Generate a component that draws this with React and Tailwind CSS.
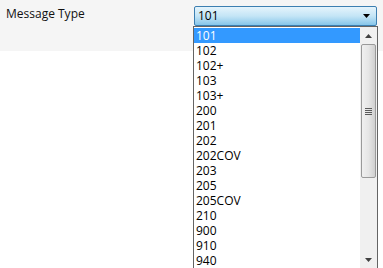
import React from "react";

const items = ["101","102","102+","103","103+","200","201","202","202COV","203","205","205COV","210","900","910","940"];

export default function App() {
  return (
    <div className="relative w-[383px] h-[268px] bg-white overflow-hidden" style={{ fontFamily: '"Segoe UI", "Open Sans", "Noto Sans", sans-serif' }}>
      <div className="h-[51px] bg-[#f5f5f5] flex items-start">
        <div className="pl-[6px] pt-[6px] text-[12px] leading-[16px] text-[#111] w-[194px]">Message Type</div>
        <div className="mt-[6px] w-[183px] h-[20px] border border-[#3c7fb1] rounded-[2px] bg-gradient-to-b from-[#e5f4fc] via-[#c4e5f6] to-[#86c6ea] flex items-center justify-between pl-[3px] pr-[6px]">
          <span className="text-[12px] leading-[16px] text-black">101</span>
          <svg width="7" height="4" viewBox="0 0 7 4"><path d="M0 0H7L3.5 4Z" fill="#000" /></svg>
        </div>
      </div>
      <div className="absolute top-[26px] left-[193px] w-[185px] h-[243px] border border-[#646464] bg-white flex">
        <div className="flex-1 flex flex-col pt-[1px]">
          {items.map((it, i) => (
            <div key={it} className={"h-[15px] pl-[2px] text-[12px] leading-[15px] " + (i === 0 ? "bg-[#3399ff] text-white" : "text-black")}>{it}</div>
          ))}
        </div>
        <div className="w-[17px] h-full bg-[#f0f0f0] flex flex-col items-center">
          <div className="h-[17px] w-full flex items-center justify-center">
            <svg width="7" height="4" viewBox="0 0 7 4"><path d="M3.5 0L7 4H0Z" fill="#404040" /></svg>
          </div>
          <div className="w-[15px] h-[134px] border border-[#9a9a9a] rounded-[2px] bg-gradient-to-r from-[#f0f0f0] via-[#e6e6e6] to-[#d0d0d0] flex items-center justify-center">
            <div className="flex flex-col gap-[1px]">
              <div className="w-[7px] h-[1px] bg-[#5a5a5a]" />
              <div className="w-[7px] h-[1px] bg-[#5a5a5a]" />
              <div className="w-[7px] h-[1px] bg-[#5a5a5a]" />
              <div className="w-[7px] h-[1px] bg-[#5a5a5a]" />
            </div>
          </div>
          <div className="flex-1" />
          <div className="h-[17px] w-full flex items-center justify-center">
            <svg width="7" height="4" viewBox="0 0 7 4"><path d="M0 0H7L3.5 4Z" fill="#404040" /></svg>
          </div>
        </div>
      </div>
    </div>
  );
}
